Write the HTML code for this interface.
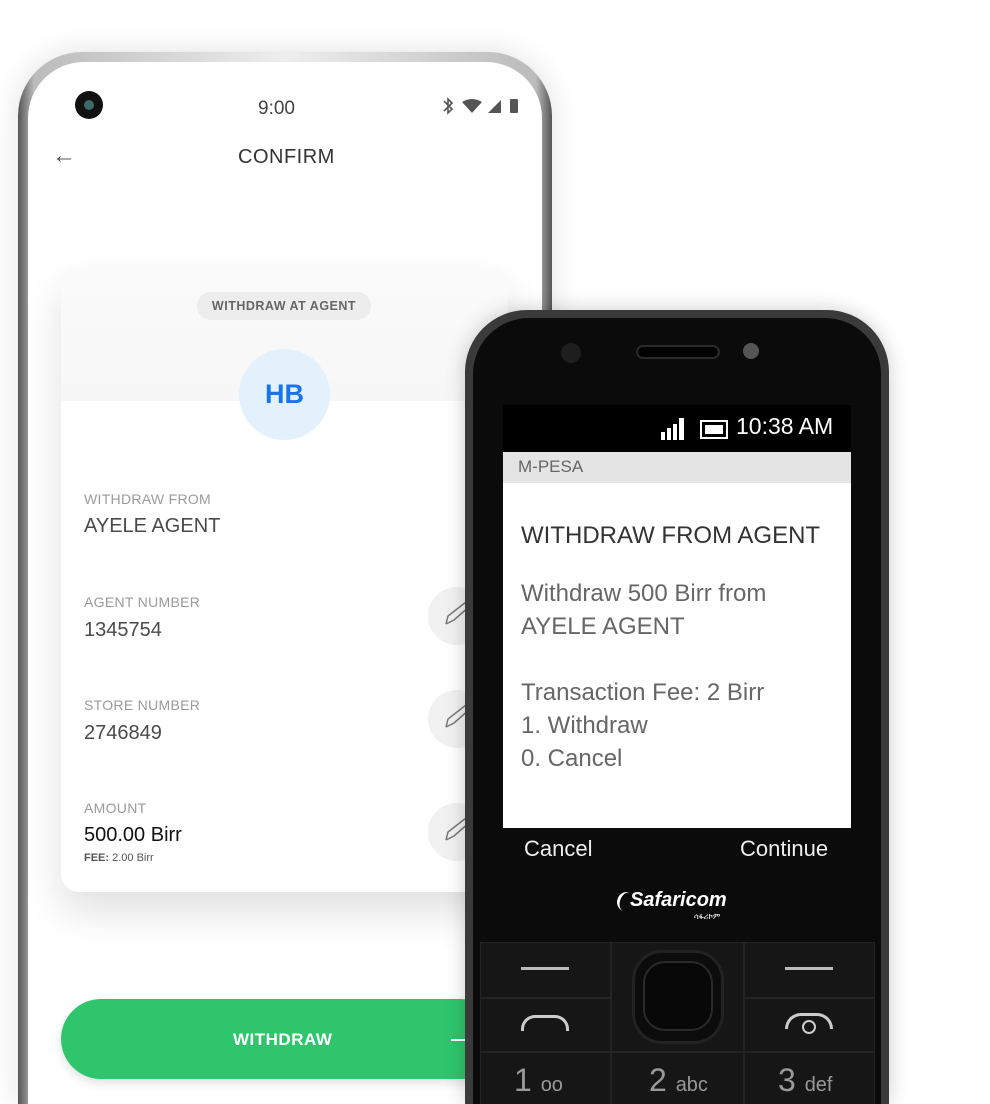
<!DOCTYPE html>
<html><head><meta charset="utf-8"><style>
*{margin:0;padding:0;box-sizing:border-box}
html,body{width:990px;height:1104px;overflow:hidden}
body{background:#fff;position:relative;font-family:"Liberation Sans",sans-serif}
.abs{position:absolute}
.sp{left:18px;top:52px;width:534px;height:1052px;border-radius:64px 64px 0 0;background:linear-gradient(90deg,#555,#bbb 3%,#eee 50%,#bbb 97%,#555);box-shadow:0 0 30px rgba(0,0,0,.12)}
.scr{left:28px;top:62px;width:514px;height:1042px;border-radius:56px 56px 0 0;background:#fff}
.lbl{color:#9a9a9a;font-size:14px;letter-spacing:.3px}
.val{color:#4a4a4a;font-size:20px}
.edit{width:58px;height:58px;border-radius:50%;background:#f1f1f1}
.fp{left:465px;top:310px;width:424px;height:794px;border-radius:62px 62px 0 0;background:#3a3a3a;box-shadow:0 0 20px rgba(0,0,0,.2)}
.fpi{left:473px;top:318px;width:408px;height:786px;border-radius:56px 56px 0 0;background:#0b0b0b}
.key{background:#161616;border:1px solid #242424}
.ft{color:#999;font-weight:300}
</style></head><body>
<div class="abs sp"></div>
<div class="abs scr"></div>
<div class="abs" style="left:75px;top:91px;width:28px;height:28px;border-radius:50%;background:#111"><div style="margin:9px;width:10px;height:10px;border-radius:50%;background:#3a6a6a"></div></div>
<div class="abs" style="left:258px;top:98px;font-size:19px;color:#444">9:00</div>
<svg class="abs" style="left:441px;top:96px" width="82" height="20"><path d="M3 5 L11 13 L7 17 L7 3 L11 7 L3 15" fill="none" stroke="#555" stroke-width="1.6"/><path d="M21 6 Q31 0 41 6 L31 17 Z" fill="#555"/><path d="M47 17 L60 4 L60 17 Z" fill="#555"/><rect x="69" y="3" width="8" height="14" rx="1" fill="#555"/></svg>
<div class="abs" style="left:52px;top:142px;font-size:24px;color:#555">←</div>
<div class="abs" style="left:238px;top:146px;font-size:20px;color:#333;letter-spacing:.5px">CONFIRM</div>
<div class="abs" style="left:61px;top:268px;width:447px;height:624px;border-radius:18px;background:linear-gradient(#fafafa,#f7f7f7 133px,#fff 133px);box-shadow:0 20px 40px rgba(0,0,0,.12)"></div>
<div class="abs" style="left:197px;top:292px;width:174px;height:28px;border-radius:14px;background:#ededed;color:#666;font-size:12.5px;font-weight:bold;text-align:center;line-height:28px;letter-spacing:.5px">WITHDRAW AT AGENT</div>
<div class="abs" style="left:239px;top:349px;width:91px;height:91px;border-radius:50%;background:#e3f1fd;color:#1a73e8;font-size:27px;font-weight:bold;text-align:center;line-height:91px">HB</div>
<div class="abs lbl" style="left:84px;top:491px">WITHDRAW FROM</div>
<div class="abs val" style="left:84px;top:515px">AYELE AGENT</div>
<div class="abs lbl" style="left:84px;top:594px">AGENT NUMBER</div>
<div class="abs val" style="left:84px;top:619px">1345754</div>
<div class="abs lbl" style="left:84px;top:697px">STORE NUMBER</div>
<div class="abs val" style="left:84px;top:722px">2746849</div>
<div class="abs lbl" style="left:84px;top:800px">AMOUNT</div>
<div class="abs" style="left:84px;top:824px;font-size:20px;color:#111">500.00 Birr</div>
<div class="abs" style="left:84px;top:852px;font-size:11px;color:#555"><b>FEE:</b> 2.00 Birr</div>
<div class="abs edit" style="left:428px;top:587px"></div>
<div class="abs edit" style="left:428px;top:690px"></div>
<div class="abs edit" style="left:428px;top:803px"></div>
<svg class="abs" style="left:444px;top:600px" width="30" height="260"><g fill="none" stroke="#777" stroke-width="1.5"><path d="M2 24 L4 16 L22 2 M2 24 L10 20 L26 6"/><path transform="translate(0,103)" d="M2 24 L4 16 L22 2 M2 24 L10 20 L26 6"/><path transform="translate(0,216)" d="M2 24 L4 16 L22 2 M2 24 L10 20 L26 6"/></g></svg>
<div class="abs" style="left:61px;top:999px;width:440px;height:80px;border-radius:40px;background:#2fc56d;box-shadow:0 4px 10px rgba(0,0,0,.12)"></div>
<div class="abs" style="left:233px;top:1030px;color:#fff;font-size:17px;font-weight:bold;letter-spacing:.5px">WITHDRAW</div>
<div class="abs" style="left:451px;top:1039px;width:14px;height:2px;background:#fff"></div>

<div class="abs fp"></div>
<div class="abs fpi"></div>
<div class="abs" style="left:561px;top:343px;width:20px;height:20px;border-radius:50%;background:#1e1e1e"></div>
<div class="abs" style="left:636px;top:345px;width:84px;height:14px;border-radius:7px;background:#000;border:2px solid #2a2a2a"></div>
<div class="abs" style="left:743px;top:343px;width:16px;height:16px;border-radius:50%;background:#555"></div>
<div class="abs" style="left:503px;top:405px;width:348px;height:423px;background:#fff"></div>
<div class="abs" style="left:503px;top:405px;width:348px;height:47px;background:#000"></div>
<svg class="abs" style="left:661px;top:416px" width="70" height="26"><g fill="#fff"><rect x="0" y="16" width="4" height="8"/><rect x="6" y="12" width="4" height="12"/><rect x="12" y="8" width="4" height="16"/><rect x="18" y="2" width="5" height="22"/></g><rect x="40" y="5" width="26" height="17" fill="none" stroke="#fff" stroke-width="2"/><rect x="44" y="9" width="18" height="9" fill="#fff"/></svg>
<div class="abs" style="left:736px;top:413px;color:#fff;font-size:23px">10:38 AM</div>
<div class="abs" style="left:503px;top:452px;width:348px;height:31px;background:#e4e4e4"></div>
<div class="abs" style="left:518px;top:457px;color:#666;font-size:17px">M-PESA</div>
<div class="abs" style="left:521px;top:522px;color:#333;font-size:24px">WITHDRAW FROM AGENT</div>
<div class="abs" style="left:521px;top:577px;color:#666;font-size:24px;line-height:33px">Withdraw 500 Birr from<br>AYELE AGENT<br><br>Transaction Fee: 2 Birr<br>1. Withdraw<br>0. Cancel</div>
<div class="abs" style="left:524px;top:836px;color:#eee;font-size:22px">Cancel</div>
<div class="abs" style="left:740px;top:836px;color:#eee;font-size:22px">Continue</div>
<div class="abs" style="left:630px;top:889px;color:#fff;font-size:20px;font-weight:bold;font-style:italic">Safaricom</div>
<div class="abs" style="left:617px;top:892px;width:20px;height:20px;border-left:3px solid #fff;border-radius:50%;transform:rotate(20deg)"></div>
<div class="abs" style="left:694px;top:912px;color:#fff;font-size:8px">ሳፋሪኮም</div>
<div class="abs key" style="left:480px;top:942px;width:131px;height:56px"></div>
<div class="abs key" style="left:480px;top:998px;width:131px;height:54px"></div>
<div class="abs key" style="left:480px;top:1052px;width:131px;height:60px"></div>
<div class="abs key" style="left:611px;top:942px;width:133px;height:110px"></div>
<div class="abs key" style="left:611px;top:1052px;width:133px;height:60px"></div>
<div class="abs key" style="left:744px;top:942px;width:131px;height:56px"></div>
<div class="abs key" style="left:744px;top:998px;width:131px;height:54px"></div>
<div class="abs key" style="left:744px;top:1052px;width:131px;height:60px"></div>
<div class="abs" style="left:632px;top:950px;width:92px;height:94px;border-radius:30px;background:#0c0c0c;border:3px solid #222"><div style="margin:8px;width:70px;height:70px;border-radius:22px;background:#080808;border:2px solid #2a2a2a"></div></div>
<div class="abs" style="left:521px;top:967px;width:48px;height:3px;background:#bbb"></div>
<div class="abs" style="left:785px;top:967px;width:48px;height:3px;background:#bbb"></div>
<div class="abs" style="left:521px;top:1015px;width:48px;height:16px;border:3px solid #ccc;border-bottom:none;border-radius:14px 14px 0 0"></div>
<div class="abs" style="left:785px;top:1013px;width:48px;height:16px;border:3px solid #ccc;border-bottom:none;border-radius:16px 16px 0 0"></div>
<div class="abs" style="left:802px;top:1020px;width:14px;height:14px;border:2px solid #ccc;border-radius:50%"></div>
<div class="abs ft" style="left:514px;top:1062px;font-size:32px">1 <span style="font-size:20px">oo</span></div>
<div class="abs ft" style="left:649px;top:1062px;font-size:32px">2 <span style="font-size:20px">abc</span></div>
<div class="abs ft" style="left:778px;top:1062px;font-size:32px">3 <span style="font-size:20px">def</span></div>
</body></html>
